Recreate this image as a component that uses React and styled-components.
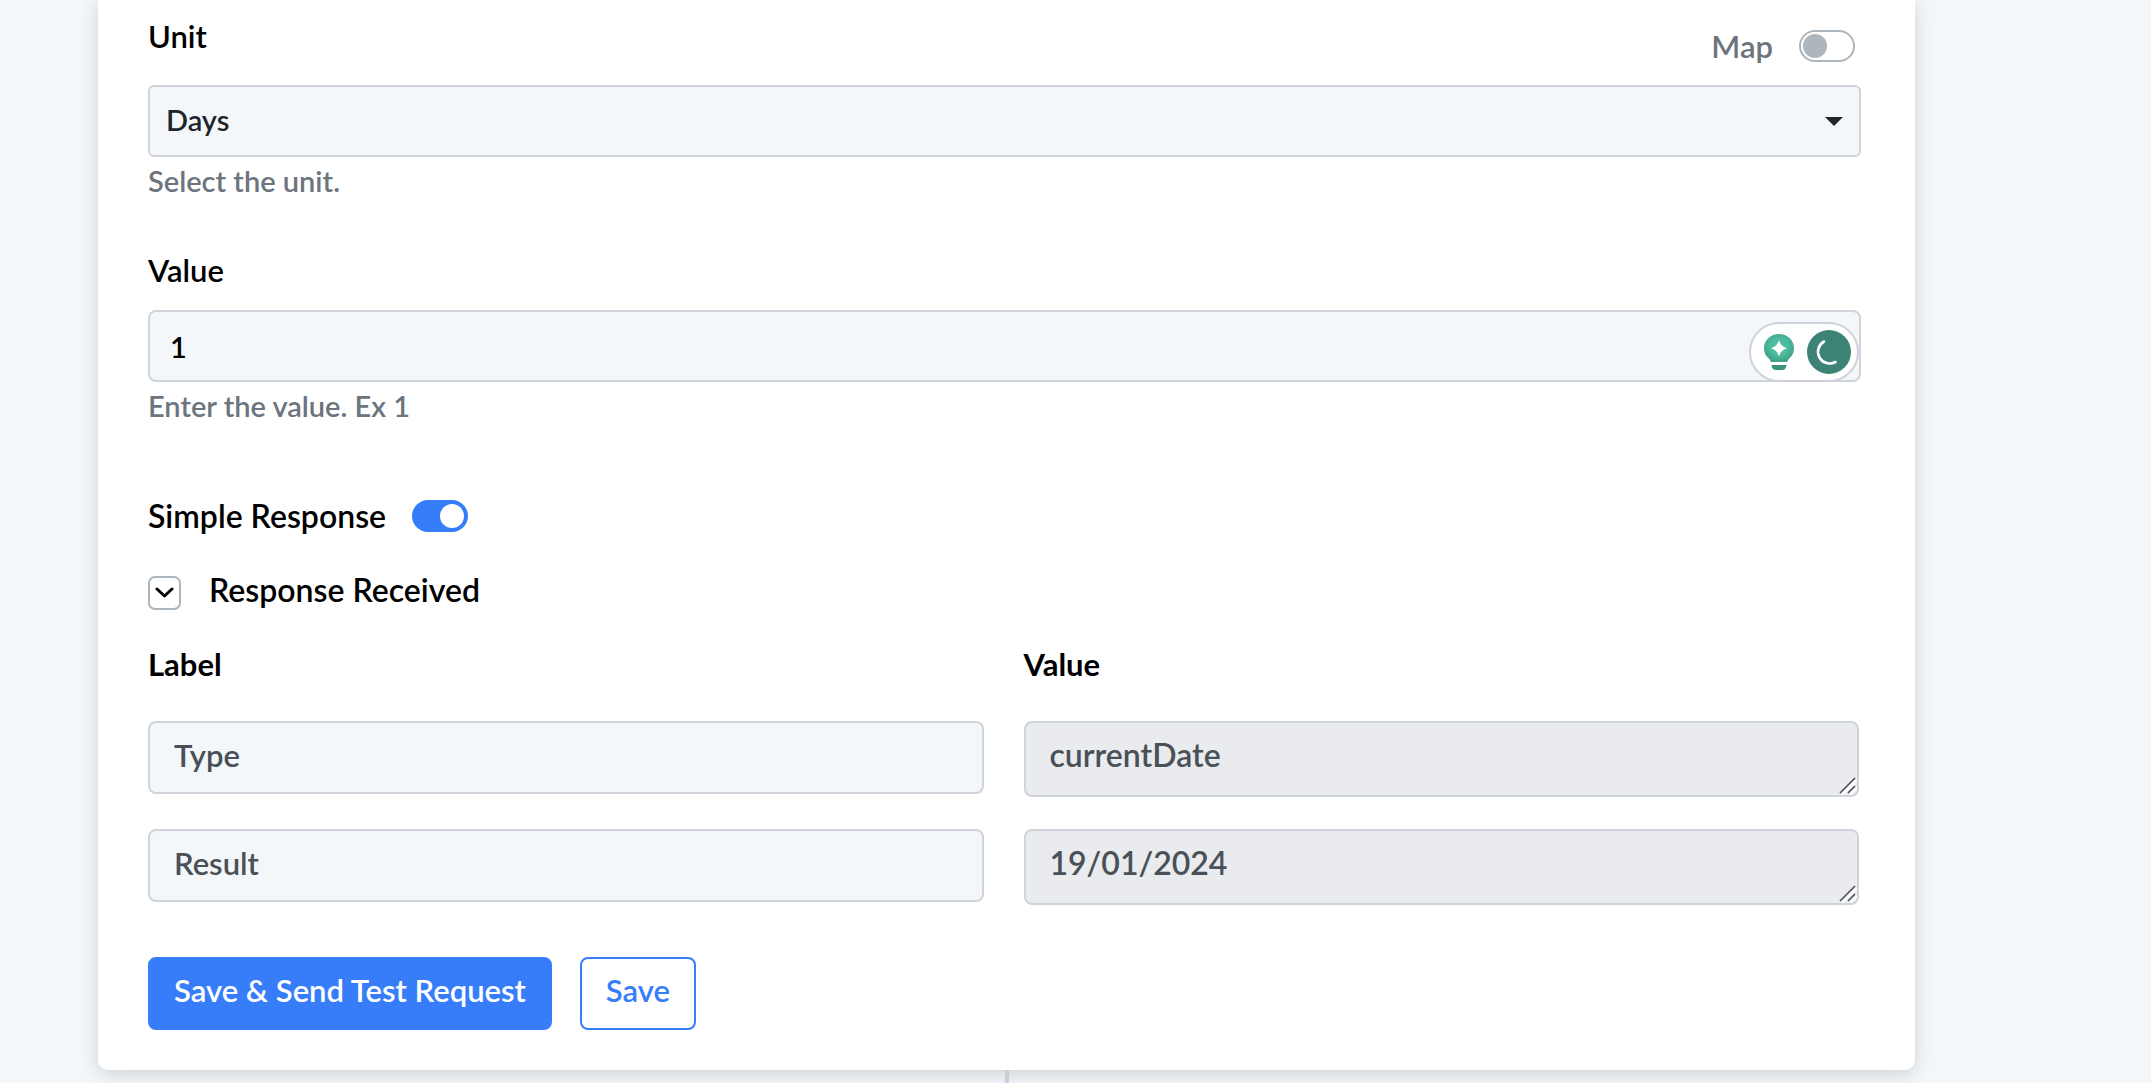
import React, { useState } from "react";
import styled, { createGlobalStyle } from "styled-components";

const GlobalStyle = createGlobalStyle`
  *, *::before, *::after { box-sizing: border-box; }
  body {
    margin: 0;
    background: #f3f7fa;
    color: #000;
    font-family: Lato, "Open Sans", sans-serif;
    font-size: 31px;
    font-weight: 600;
    line-height: 40px;
  }
`;

const Page = styled.main`
  display: flex;
  flex-direction: column;
  min-height: 100vh;
  padding: 0 236px 0 98px;
`;

const Card = styled.form`
  padding: 16px 54px 40px 50px;
  border-radius: 0 0 10px 10px;
  background: #fff;
  box-shadow: 0 4px 18px rgba(30, 45, 60, 0.18);
`;

const Connector = styled.div`
  flex: 1;
  align-self: center;
  width: 4px;
  background: #c9cdd5;
`;

const Field = styled.div`
  display: flex;
  flex-direction: column;
  margin-bottom: ${(p) => p.$gap}px;
`;

const FieldHeader = styled.div`
  display: flex;
  justify-content: space-between;
  height: ${(p) => (p.$tall ? 69 : 60)}px;
`;

const FieldLabel = styled.label`
  font-size: 31px;
`;

const Help = styled.p`
  margin: 4px 0 0;
  color: #6c757d;
  font-size: 29px;
`;

const SwitchLabel = styled.label`
  display: flex;
  align-items: center;
  align-self: flex-start;
  gap: 26px;
  padding: ${(p) => (p.$muted ? "10px 6px 0 0" : "0")};
  color: ${(p) => (p.$muted ? "#6c757d" : "#000")};
  font-size: ${(p) => (p.$muted ? 31 : 32)}px;
`;

const Switch = styled.input`
  appearance: none;
  display: flex;
  align-items: center;
  width: 56px;
  height: 32px;
  margin: 0;
  padding: 0 2px;
  border: 2px solid #adb5bd;
  border-radius: 16px;
  background: #fff;

  &::before {
    content: "";
    width: 24px;
    height: 24px;
    border-radius: 50%;
    background: #adb5bd;
  }

  &:checked {
    justify-content: flex-end;
    border-color: #377dfa;
    background: #377dfa;
  }

  &:checked::before {
    background: #fff;
  }
`;

const Control = styled.div`
  position: relative;
  display: flex;
`;

const Select = styled.select`
  appearance: none;
  width: 100%;
  height: 72px;
  padding: 0 48px 2px 16px;
  border: 2px solid #ced4da;
  border-radius: 6px;
  background: #f3f7fa;
  color: #212529;
  font: inherit;
  font-size: 29px;
`;

const Caret = styled.svg`
  position: absolute;
  top: 32px;
  right: 18px;
  width: 18px;
  height: 9px;
  pointer-events: none;
`;

const TextInput = styled.input`
  width: 100%;
  height: ${(p) => (p.$row ? 73 : 72)}px;
  padding: ${(p) => (p.$row ? "0 24px 5px" : "0 20px")};
  border: 2px solid #ced4da;
  border-radius: 8px;
  background: #f3f7fa;
  color: ${(p) => (p.$row ? "#495057" : "#000")};
  font: inherit;
  font-size: ${(p) => (p.$row ? 31 : 29)}px;
`;

const Assistant = styled.div`
  position: absolute;
  top: 12px;
  right: 2px;
  display: flex;
  align-items: center;
  justify-content: space-between;
  width: 110px;
  height: 60px;
  padding: 0 6px 0 12px;
  border: 2px solid #ced2dc;
  border-radius: 30px;
  background: #fff;
`;

const ResponseToggle = styled.div`
  display: flex;
  align-items: flex-end;
  gap: 28px;
  margin-top: 34px;
  font-size: 32px;
`;

const ExpandButton = styled.button`
  display: grid;
  place-items: center;
  width: 33px;
  height: 34px;
  padding: 0;
  border: 2px solid #adb5bd;
  border-radius: 7px;
  background: #fff;
`;

const ResponseGrid = styled.div`
  display: grid;
  grid-template-columns: 1fr 1fr;
  gap: 32px 40px;
  align-items: start;
  margin: 34px 2px 52px 0;
`;

const ColumnTitle = styled.h2`
  margin: 0 0 5px;
  font-size: 31px;
  font-weight: 700;
`;

const ReadOnlyArea = styled.textarea`
  display: block;
  width: 100%;
  height: 76px;
  padding: 12px 24px;
  border: 2px solid #ced4da;
  border-radius: 8px;
  background: #eaebef;
  color: #495057;
  font: inherit;
  font-size: 32px;
  resize: none;
  overflow: hidden;
`;

const Grip = styled.svg`
  position: absolute;
  right: 2px;
  bottom: 2px;
  width: 18px;
  height: 18px;
  pointer-events: none;
`;

const Actions = styled.div`
  display: flex;
  gap: 28px;
`;

const Button = styled.button`
  height: 73px;
  padding: 0 24px 8px;
  border: 2px solid #377dfa;
  border-radius: 8px;
  background: ${(p) => (p.$primary ? "#377dfa" : "#fff")};
  color: ${(p) => (p.$primary ? "#fff" : "#377dfa")};
  font: inherit;
`;

const rows = [
  { label: "Type", value: "currentDate" },
  { label: "Result", value: "19/01/2024" },
];

function BulbIcon() {
  return (
    <svg width="32" height="38" viewBox="0 0 32 38" aria-hidden="true">
      <defs>
        <radialGradient id="bulb" cx="50%" cy="45%" r="55%">
          <stop offset="0.5" stopColor="#4fbc9f" />
          <stop offset="1" stopColor="#3da287" />
        </radialGradient>
      </defs>
      <path
        d="M16 1C7.500 1 1 7.300 1 15.300c0 4.700 2 7.700 4.800 10.300 1 1 1.600 2 2 3.400h16.400c.4-1.400 1-2.400 2-3.400C29 23 31 20 31 15.300 31 7.300 24.500 1 16 1Z"
        fill="url(#bulb)"
      />
      <path
        d="M16 7c1.500 4.800 3.500 6.800 8.300 8.300-4.800 1.500-6.800 3.500-8.300 8.300-1.500-4.800-3.500-6.800-8.300-8.300C12.500 13.800 14.500 11.800 16 7Z"
        fill="#fff"
      />
      <path d="M8.500 32h15c0 3-1.800 5-4.500 5h-6c-2.700 0-4.500-2-4.500-5Z" fill="#3b927d" />
    </svg>
  );
}

function ProgressIcon() {
  return (
    <svg width="44" height="44" viewBox="0 0 44 44" aria-hidden="true">
      <circle cx="22" cy="22" r="22" fill="#3d8375" />
      <path d="M17 11.500A11.500 11.500 0 1 0 28.500 32" fill="none" stroke="#fff" strokeWidth="2.600" strokeLinecap="round" />
    </svg>
  );
}

export default function App() {
  const [open, setOpen] = useState(true);
  return (
    <>
      <GlobalStyle />
      <Page>
        <Card onSubmit={(e) => e.preventDefault()}>
          <Field $gap={49}>
            <FieldHeader $tall>
              <FieldLabel htmlFor="unit">Unit</FieldLabel>
              <SwitchLabel $muted>
                Map
                <Switch type="checkbox" role="switch" />
              </SwitchLabel>
            </FieldHeader>
            <Control>
              <Select id="unit" defaultValue="Days">
                <option>Days</option>
              </Select>
              <Caret viewBox="0 0 18 9" aria-hidden="true">
                <path d="M0 0h18L9 9Z" fill="#212529" />
              </Caret>
            </Control>
            <Help>Select the unit.</Help>
          </Field>

          <Field $gap={70}>
            <FieldHeader>
              <FieldLabel htmlFor="value">Value</FieldLabel>
            </FieldHeader>
            <Control>
              <TextInput id="value" defaultValue="1" />
              <Assistant>
                <BulbIcon />
                <ProgressIcon />
              </Assistant>
            </Control>
            <Help>Enter the value. Ex 1</Help>
          </Field>

          <SwitchLabel>
            Simple Response
            <Switch type="checkbox" role="switch" defaultChecked />
          </SwitchLabel>

          <ResponseToggle>
            <ExpandButton
              type="button"
              aria-expanded={open}
              aria-label="Toggle response"
              onClick={() => setOpen(!open)}
            >
              <svg width="19" height="12" viewBox="0 0 19 12" aria-hidden="true">
                <path d="M2 2l7.500 7L17 2" fill="none" stroke="#000" strokeWidth="3" strokeLinecap="round" strokeLinejoin="round" />
              </svg>
            </ExpandButton>
            Response Received
          </ResponseToggle>

          {open && (
            <ResponseGrid>
              <ColumnTitle>Label</ColumnTitle>
              <ColumnTitle>Value</ColumnTitle>
              {rows.map((row) => (
                <React.Fragment key={row.label}>
                  <TextInput $row aria-label={`${row.label} label`} defaultValue={row.label} />
                  <Control>
                    <ReadOnlyArea readOnly rows={1} aria-label={`${row.label} value`} defaultValue={row.value} />
                    <Grip viewBox="0 0 18 18" aria-hidden="true">
                      <path d="M2 17L17 2M10 17l7-7" stroke="#fff" strokeWidth="2" transform="translate(1 1)" />
                      <path d="M1 16L16 1M9 16l7-7" stroke="#4c4d50" strokeWidth="1.500" />
                    </Grip>
                  </Control>
                </React.Fragment>
              ))}
            </ResponseGrid>
          )}

          <Actions>
            <Button type="submit" $primary>Save &amp; Send Test Request</Button>
            <Button type="button">Save</Button>
          </Actions>
        </Card>
        <Connector />
      </Page>
    </>
  );
}
